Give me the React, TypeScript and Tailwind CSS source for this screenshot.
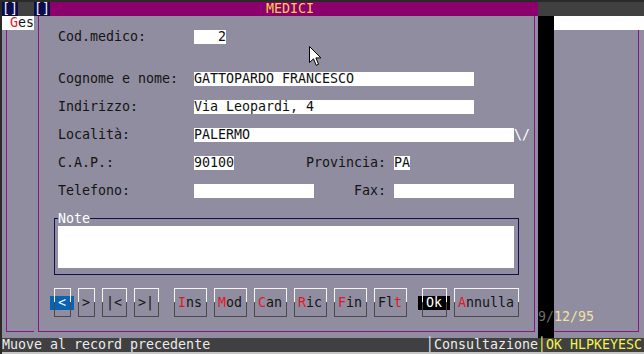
import type { ReactNode } from "react";

const gray = "bg-[#8f8d9f]";
const purpleLine = "border-[#84187c]";

function Field({ w, children, right }: { w: string; children?: ReactNode; right?: boolean }) {
  return (
    <span className={`${w} h-[14px] bg-white text-[#101010] whitespace-pre ${right ? "text-right" : ""}`}>
      {children}
    </span>
  );
}

function Line() {
  return (
    <div className="flex w-px flex-col">
      <div className="h-[6px] bg-[#f4f4f4]" />
      <div className="flex-1 bg-[#4a4a4a]" />
    </div>
  );
}

function Btn({ w, children, tone = "" }: { w: string; children: ReactNode; tone?: string }) {
  return (
    <div className={`flex flex-col ${w}`}>
      <div className="h-[14px] pl-[4px] pr-[3px] pt-[6px]">
        <div className="h-[8px] border-x border-t border-[#f4f4f4]" />
      </div>
      <div className={`flex h-[14px] pl-[4px] pr-[3px] ${tone}`}>
        <Line />
        <span className="flex-1 whitespace-pre pl-[3px]">{children}</span>
        <Line />
      </div>
      <div className="h-[14px] pl-[4px] pr-[3px]">
        <div className="h-[7px] border-x border-b border-[#4a4a4a]" />
      </div>
    </div>
  );
}

const Hot = ({ children }: { children: ReactNode }) => <span className="text-[#e2182a]">{children}</span>;

function Row({ label, children }: { label: string; children: ReactNode }) {
  return (
    <div className="flex h-[14px] pl-[19px]">
      <span className="w-[136px]">{label}</span>
      {children}
    </div>
  );
}

export default function App() {
  return (
    <div className="relative h-[354px] w-[644px] overflow-hidden border-l-2 border-t-2 border-[#2a2a2a] bg-[#c6c6c6] font-['DejaVu_Sans_Mono',monospace] text-[13.3px] leading-[14px] text-[#141414]">
      {/* row 0: title bars */}
      <div className="flex h-[14px]">
        <span className="w-[16px] bg-[#0c0c4a] text-[#f0f0f0]">[]</span>
        <span className="w-[16px] bg-[#404040]" />
        <span className="w-[16px] bg-[#0c0c4a] text-[#f0f0f0]">[]</span>
        <span className="w-[488px] bg-[#8c006e] pl-[216px] text-[#f8d048]">MEDICI</span>
        <span className="flex-1 bg-[#404040]" />
      </div>

      {/* rows 1-23 */}
      <div className="flex h-[322px]">
        {/* background window, left part */}
        <div className={`flex w-[32px] flex-col ${gray}`}>
          <div className="h-[14px] whitespace-pre bg-white">
            {" "}
            <Hot>G</Hot>es
          </div>
          <div className={`ml-[4px] h-[302px] border-b border-l ${purpleLine}`} />
        </div>

        {/* foreground window */}
        <div className={`w-[504px] ${gray}`}>
          <div className={`ml-[4px] mr-[3px] flex h-[316px] flex-col border-x border-b ${purpleLine}`}>
            <div className="h-[14px]" />
            <Row label="Cod.medico:">
              <Field w="w-[32px]" right>
                2
              </Field>
            </Row>
            <div className="h-[28px]" />
            <Row label="Cognome e nome:">
              <Field w="w-[280px]">GATTOPARDO FRANCESCO</Field>
            </Row>
            <div className="h-[14px]" />
            <Row label="Indirizzo:">
              <Field w="w-[280px]">Via Leopardi, 4</Field>
            </Row>
            <div className="h-[14px]" />
            <Row label="Località:">
              <Field w="w-[320px]">PALERMO</Field>
              <span className="text-white">\/</span>
            </Row>
            <div className="h-[14px]" />
            <Row label="C.A.P.:">
              <Field w="w-[40px]">90100</Field>
              <span className="ml-[72px] w-[88px]">Provincia:</span>
              <Field w="w-[16px]">PA</Field>
            </Row>
            <div className="h-[14px]" />
            <Row label="Telefono:">
              <Field w="w-[120px]" />
              <span className="ml-[40px] w-[40px]">Fax:</span>
              <Field w="w-[120px]" />
            </Row>
            <div className="h-[14px]" />

            {/* Note box */}
            <div className="ml-[15px] w-[465px]">
              <div className="flex h-[14px]">
                <div className="mt-[6px] h-[8px] w-[4px] border-l border-t border-[#10104a]" />
                <span className="text-white">Note</span>
                <div className="mt-[6px] h-[8px] flex-1 border-r border-t border-[#10104a]" />
              </div>
              <div className="h-[49px] border-x border-b border-[#10104a] pl-[3px]">
                <div className="h-[42px] w-[456px] bg-white" />
              </div>
            </div>

            {/* buttons */}
            <div className="ml-[11px] mt-[7px] flex">
              <Btn w="w-[24px]" tone="bg-[#0a62b2] text-white">
                &lt;
              </Btn>
              <Btn w="w-[24px]">&gt;</Btn>
              <Btn w="w-[32px]">|&lt;</Btn>
              <Btn w="w-[32px]">&gt;|</Btn>
              <div className="w-[8px]" />
              <Btn w="w-[40px]">
                <Hot>I</Hot>ns
              </Btn>
              <Btn w="w-[40px]">
                <Hot>M</Hot>od
              </Btn>
              <Btn w="w-[40px]">
                <Hot>C</Hot>an
              </Btn>
              <Btn w="w-[40px]">
                <Hot>R</Hot>ic
              </Btn>
              <Btn w="w-[40px]">
                <Hot>F</Hot>in
              </Btn>
              <Btn w="w-[40px]">
                Fl<Hot>t</Hot>
              </Btn>
              <div className="w-[8px]" />
              <Btn w="w-[32px]" tone="bg-black text-white">
                Ok
              </Btn>
              <Btn w="w-[72px]">
                <Hot>A</Hot>nnulla
              </Btn>
            </div>
          </div>
        </div>

        {/* shadow */}
        <div className="flex w-[16px] flex-col justify-end bg-black pb-[14px] text-[#6c6c6c]">9/</div>

        {/* background window, right part */}
        <div className={`flex flex-1 flex-col ${gray}`}>
          <div className="h-[14px] bg-white" />
          <div className={`flex h-[302px] w-[85px] flex-col justify-end border-b border-r pb-[7px] text-[#f2e2a2] ${purpleLine}`}>
            12/95
          </div>
        </div>
      </div>

      {/* status bar */}
      <div className="flex h-[14px] whitespace-pre bg-[#404040] text-[#ececec]">
        <span className="w-[424px]">Muove al record precedente</span>
        <span className="w-[112px]">│Consultazione</span>
        <span className="flex-1 text-[#f4f44a]">│OK HLPKEYESC</span>
      </div>

      {/* mouse pointer */}
      <svg className="absolute left-[307px] top-[44px]" width="13" height="21" viewBox="0 0 13 21">
        <path
          d="M0.5 0.5 L0.5 16.5 L4.5 12.8 L7.2 19.3 L9.6 18.3 L6.9 11.9 L11.9 11.9 Z"
          fill="#fff"
          stroke="#000"
          strokeWidth="1"
          strokeLinejoin="miter"
        />
      </svg>
    </div>
  );
}
